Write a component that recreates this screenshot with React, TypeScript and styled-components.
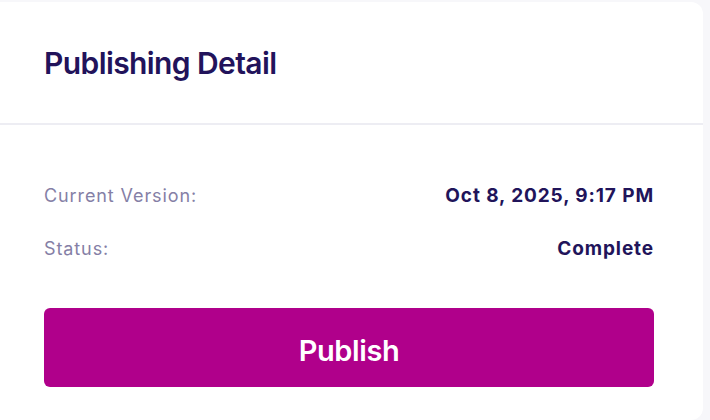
import { createGlobalStyle, styled } from "styled-components";

const GlobalStyle = createGlobalStyle`
  body {
    margin: 0;
    background-color: #f7f7fa;
    font-family: Inter, "Noto Sans", sans-serif;
  }
`;

interface DetailRow {
  label: string;
  value: string;
}

const rows: DetailRow[] = [
  { label: "Current Version:", value: "Oct 8, 2025, 9:17 PM" },
  { label: "Status:", value: "Complete" },
];

export default function App() {
  return (
    <>
      <GlobalStyle />
      <Page>
        <Card>
          <CardHeader>
            <Title>Publishing Detail</Title>
          </CardHeader>
          <CardBody>
            <DetailList>
              {rows.map((row) => (
                <Row key={row.label}>
                  <Label>{row.label}</Label>
                  <Value>{row.value}</Value>
                </Row>
              ))}
            </DetailList>
            <PublishButton type="button">Publish</PublishButton>
          </CardBody>
        </Card>
      </Page>
    </>
  );
}

const Page = styled.div`
  padding: 2px 7px 0 0;
  height: 418px;
`;

const Card = styled.div`
  background-color: white;
  border-radius: 0 12px 12px 0;
  height: 100%;
`;

const CardHeader = styled.div`
  height: 121px;
  padding: 0 44px;
  display: flex;
  align-items: center;
  border-bottom: 2px solid #ededf3;
`;

const Title = styled.h2`
  margin: 0;
  font-size: 30px;
  font-weight: 600;
  letter-spacing: -0.6px;
  color: #22135b;
`;

const CardBody = styled.div`
  padding: 58px 49px 0 44px;
  display: flex;
  flex-direction: column;
`;

const DetailList = styled.div`
  display: flex;
  flex-direction: column;
  gap: 29px;
  margin-bottom: 48px;
`;

const Row = styled.div`
  display: flex;
  justify-content: space-between;
  align-items: center;
  height: 24px;
`;

const Label = styled.span`
  font-size: 18px;
  font-weight: 400;
  letter-spacing: 0.9px;
  color: #857fa6;
`;

const Value = styled.span`
  font-size: 19px;
  font-weight: 700;
  letter-spacing: 0.9px;
  color: #21145a;
`;

const PublishButton = styled.button`
  height: 79px;
  padding: 5px 0 0;
  border: none;
  border-radius: 6px;
  background-color: #b0008b;
  color: white;
  font-family: Inter, "Noto Sans", sans-serif;
  font-size: 29px;
  font-weight: 600;
  letter-spacing: -0.4px;
  cursor: pointer;
`;
